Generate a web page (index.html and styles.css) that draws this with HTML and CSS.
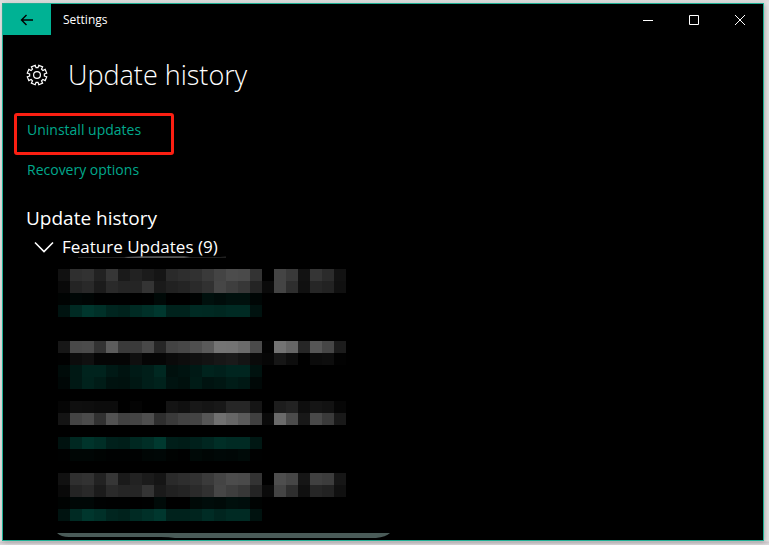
FILE: index.html
```
<!DOCTYPE html>
<html lang="en">
<head>
    <meta charset="UTF-8">
    <meta name="viewport" content="width=device-width, initial-scale=1.0">
    <title>Settings</title>
    <link rel="stylesheet" href="styles.css">
</head>
<body>
    <div class="window">
        <header class="titlebar">
            <button class="back-btn" aria-label="Back">
                <svg width="14" height="12" viewBox="0 0 14 12"><path d="M13 6H1.5M6.5 1L1.5 6l5 5"/></svg>
            </button>
            <span class="window-title">Settings</span>
            <div class="window-controls">
                <button aria-label="Minimize">
                    <svg width="10" height="10" viewBox="0 0 10 10"><path d="M0 5.5h10"/></svg>
                </button>
                <button aria-label="Maximize">
                    <svg width="10" height="10" viewBox="0 0 10 10"><path d="M.5.5h9v9h-9z"/></svg>
                </button>
                <button aria-label="Close">
                    <svg width="10" height="10" viewBox="0 0 10 10"><path d="M0 0l10 10M10 0L0 10"/></svg>
                </button>
            </div>
        </header>

        <main class="content">
            <div class="page-header">
                <svg id="gear" width="22" height="22" viewBox="0 0 22 22"><path/><circle cx="11" cy="11" r="3.4"/></svg>
                <h1>Update history</h1>
            </div>

            <nav class="links">
                <a class="highlighted" href="#uninstall">Uninstall updates</a>
                <a href="#recovery">Recovery options</a>
            </nav>

            <section class="history">
                <h2>Update history</h2>
                <button class="group-toggle" aria-expanded="true">
                    <svg width="20" height="12" viewBox="0 0 20 12"><path d="M1 1.5l9 9 9-9"/></svg>
                    <span>Feature Updates (9)</span>
                </button>
                <svg class="toggle-line" width="150" height="3" viewBox="0 0 150 3"><path d="M0 1h50l2 1H0z" fill="#222"/><path d="M46 1l20-.7h40l8 .9-8 .8H50z" fill="#555"/><path d="M112 1h30l6-.5v1.2h-36z" fill="#2a2a2a"/></svg>
                <div class="entries" id="entries"></div>
            </section>
        </main>
        <svg class="bottom-edge" width="334" height="5" viewBox="0 0 334 5"><path d="M0 0h333q-4 4-14 5H118q-6-1-14-1H12Q4 4 0 0z" fill="#4a5b58"/></svg>
    </div>

    <script>
        // Brightness of each cell, two hex digits per cell.
        // "g" rows are grey (name and version), "t" rows are teal (status link).
        const entries = [
            [
                'g 11 2f 32 22 36 1a 22 1b 15 2a 2e 31 3a 44 4c 4a 33 00 44 39 12 35 2b 12',
                'g 09 24 29 1b 2a 25 25 34 1a 21 24 2a 31 46 3e 37 24 0a 44 2e 10 26 22 10',
                't 03 07 05 01 01 01 00 01 09 00 00 03 10 0c 10 10 06',
                't 13 2a 36 30 25 22 2a 30 37 22 22 2a 29 27 2a 2a 12'
            ],
            [
                'g 17 49 4b 33 5c 3a 3a 48 26 43 47 4f 5a 74 73 6b 4a 03 73 66 26 56 46 1c',
                'g 01 0c 10 05 05 05 0f 05 05 0a 0d 10 13 17 1a 14 0a 06 16 0d 00 0b 0d 02',
                't 0b 18 23 23 19 13 1a 1e 28 10 13 19 23 20 25 25 12',
                't 07 18 22 1c 12 11 17 1e 22 13 10 1b 13 16 1c 18 08'
            ],
            [
                'g 05 0f 0e 0c 0c 00 04 00 00 14 10 18 15 18 26 26 15 00 1d 22 0e 15 12 06',
                'g 14 44 4b 31 52 41 44 4e 2e 3a 42 44 56 70 66 5a 40 0a 6a 4b 18 49 3a 19',
                'g 00',
                't 12 28 34 2e 20 1e 28 2e 39 1e 1c 20 26 2e 2a 2a 17',
                't 01 06 06 04 02 02 02 06 07 03 01 09 06 08 07 0a 01'
            ],
            [
                'g 11 2f 32 22 36 1a 22 1b 15 2a 2e 31 3a 44 4c 4a 33 00 4e 46 16 40 3c 16',
                'g 09 24 29 1b 2a 25 25 34 1a 21 24 2a 31 46 3e 37 24 0a 44 2e 10 26 22 10',
                't 03 07 07 02 01 01 00 01 0a 00 00 09 0c 0a 0f 0d 03',
                't 13 2a 36 30 25 22 2a 30 37 22 22 24 2c 25 2a 2a 12'
            ]
        ];

        const list = document.getElementById('entries');
        entries.forEach(rows => {
            const entry = document.createElement('div');
            entry.className = 'entry';
            rows.forEach(row => {
                const line = document.createElement('div');
                line.className = 'entry-row';
                const [kind, ...levels] = row.split(' ');
                levels.forEach(level => {
                    const v = parseInt(level, 16);
                    const cell = document.createElement('i');
                    cell.style.background = kind === 'g'
                        ? `rgb(${v}, ${v}, ${v})`
                        : `rgb(0, ${v}, ${Math.round(v * 0.83)})`;
                    line.appendChild(cell);
                });
                entry.appendChild(line);
            });
            list.appendChild(entry);
        });

        // Gear outline with eight teeth
        let d = '';
        for (let i = 0; i < 8; i++) {
            [[-15, 7.4], [-12, 9.9], [12, 9.9], [15, 7.4]].forEach(([offset, r]) => {
                const a = (i * 45 + 22.5 + offset) * Math.PI / 180;
                d += (d ? 'L' : 'M') + (11 + r * Math.cos(a)).toFixed(2) + ' ' + (11 + r * Math.sin(a)).toFixed(2);
            });
        }
        document.querySelector('#gear path').setAttribute('d', d + 'z');
    </script>
</body>
</html>
```
FILE: styles.css
```
* {
    box-sizing: border-box;
}
body {
    margin: 0;
    min-height: 100vh;
    display: flex;
    padding: 3px 5px 4px 2px;
    background: linear-gradient(to bottom, #dcdcdc, #e4e4e4 3px, #e4e4e4 calc(100% - 4px), #cfcbce calc(100% - 3px), #dedbdd);
    font-family: "Segoe UI", "Open Sans", "Noto Sans", sans-serif;
    color: #fff;
}
.window {
    flex: 1;
    display: flex;
    flex-direction: column;
    background-color: #000;
    border: 1px solid #1fb095;
    box-shadow: 1px 1px 5px rgba(0, 0, 0, 0.25);
}
button {
    background: none;
    border: none;
    padding: 0;
    color: inherit;
    font-family: inherit;
    cursor: pointer;
}
svg {
    display: block;
    flex: none;
    fill: none;
    stroke: #fff;
}
.titlebar {
    display: flex;
    align-items: center;
    height: 31px;
}
.back-btn {
    display: flex;
    align-items: center;
    justify-content: center;
    width: 48px;
    height: 31px;
    background-color: #00b294;
}
.back-btn svg {
    stroke: #000;
    stroke-width: 1.4;
}
.window-title {
    margin-left: 12px;
    font-size: 12px;
}
.window-controls {
    display: flex;
    margin-left: auto;
}
.window-controls button {
    display: flex;
    align-items: center;
    justify-content: center;
    width: 46px;
    height: 31px;
}
.content {
    padding: 20px 23px 0;
}
.page-header {
    display: flex;
    align-items: center;
    gap: 20px;
}
.page-header svg {
    stroke-width: 1.2;
}
h1 {
    margin: 0;
    font-size: 27px;
    line-height: 40px;
    font-weight: 300;
}
.links {
    display: flex;
    flex-direction: column;
    align-items: flex-start;
    gap: 1px;
    margin-top: 18px;
}
.links a {
    color: #00a88c;
    font-size: 14px;
    line-height: 28px;
    text-decoration: none;
    padding-left: 1px;
}
.links .highlighted {
    width: 160px;
    margin-left: -12px;
    padding: 0 0 8px 10px;
    border: 3px solid #fc1f12;
    border-radius: 3px;
}
h2 {
    margin: 20px 0 6px;
    font-size: 19px;
    line-height: 28px;
    font-weight: 400;
}
.group-toggle {
    display: flex;
    align-items: center;
    gap: 8px;
    padding-left: 8px;
    font-size: 17px;
    line-height: 18px;
}
.group-toggle svg {
    stroke-width: 1.6;
}
.toggle-line {
    margin-left: 52px;
    stroke: none;
}
.entries {
    display: flex;
    flex-direction: column;
    gap: 12px;
    margin: 10px 0 0 32px;
}
.entry:first-child {
    margin-bottom: 12px;
}
.entry-row {
    display: flex;
    height: 12px;
}
.entry-row i {
    width: 12px;
    height: 12px;
}
.bottom-edge {
    margin: auto 0 2px 54px;
    stroke: none;
}
```
